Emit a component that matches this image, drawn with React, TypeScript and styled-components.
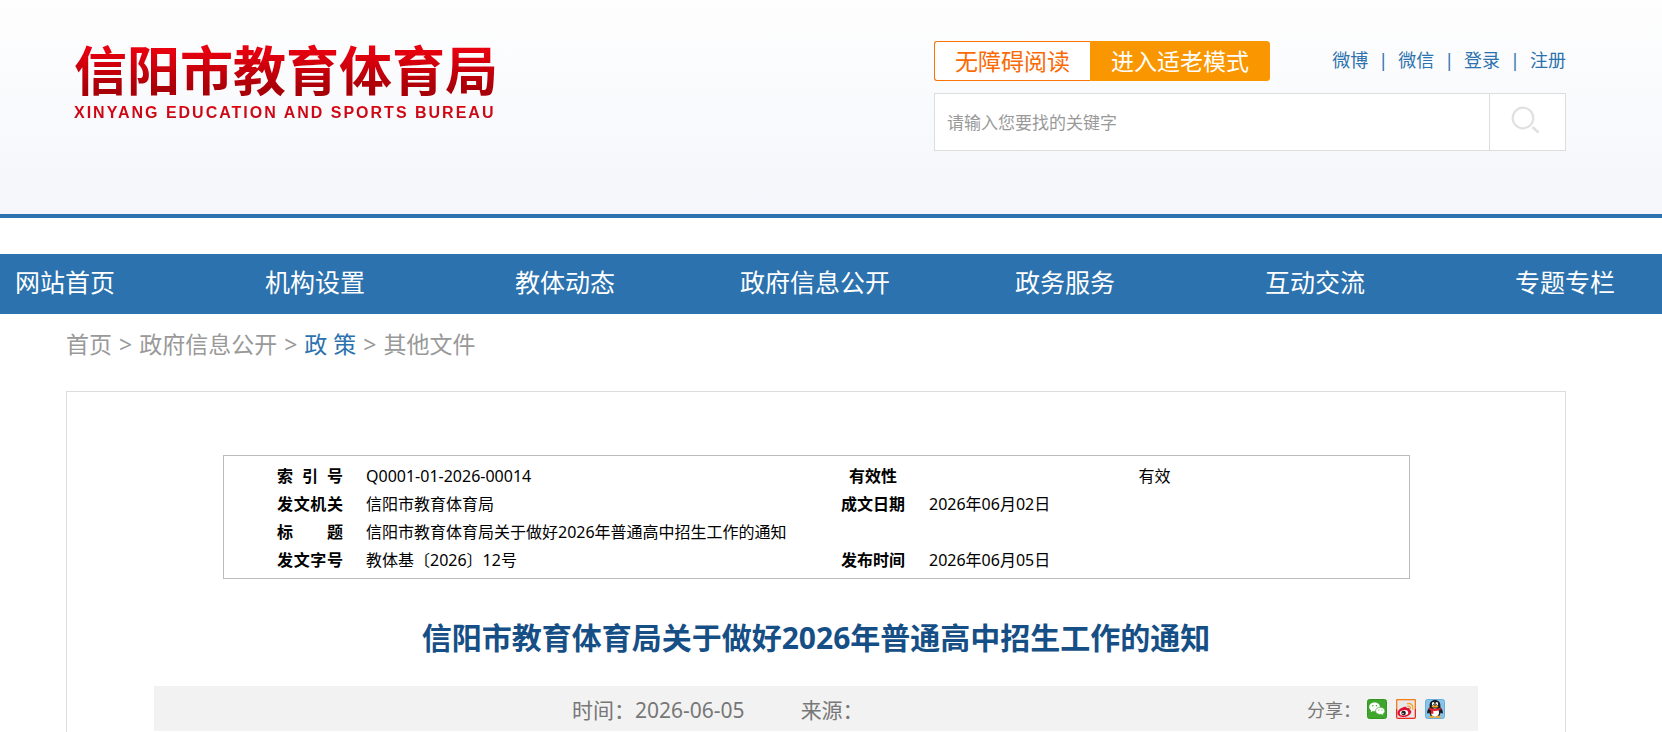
import React from "react";
import styled, { createGlobalStyle } from "styled-components";

const latinFirst = '"Noto Sans", "Noto Sans CJK SC", sans-serif';
const blue = "#2c72ae";

const GlobalStyle = createGlobalStyle`
  * { box-sizing: border-box; }
  body { margin: 0; background: #fff; font-family: ${latinFirst}; color: #000; overflow-x: hidden; }
  a { color: inherit; text-decoration: none; }
  h1, h2, p { margin: 0; padding: 0; }
  button, input { font-family: inherit; }
`;

const Header = styled.header`
  display: flex;
  justify-content: space-between;
  align-items: flex-start;
  height: 218px;
  padding: 38px 96px 0 66px;
  border-bottom: 4px solid ${blue};
  background: linear-gradient(#fefefe, #f4f6fb);
`;

const Brand = styled.a`
  display: flex;
  flex-direction: column;
  gap: 4px;
  padding-left: 8px;
`;

const BrandName = styled.h1`
  font: 700 53px/60px "Noto Sans CJK SC", sans-serif;
  color: transparent;
  background: linear-gradient(#e8000f 20%, #a80008 85%);
  background-clip: text;
  white-space: nowrap;
`;

const BrandLatin = styled.p`
  font: 700 16px/22px "Liberation Sans", sans-serif;
  letter-spacing: 2px;
  color: transparent;
  background: linear-gradient(#e8000f, #b0101a);
  background-clip: text;
  white-space: nowrap;
`;

const Tools = styled.div`
  width: 632px;
  padding-top: 3px;
`;

const ToolsTop = styled.div`
  display: flex;
  justify-content: space-between;
  height: 40px;
  margin-bottom: 12px;
`;

const ModeGroup = styled.div`
  display: flex;
`;

const ModeButton = styled.button<{ $filled?: boolean }>`
  height: 40px;
  padding: 0 20px;
  border: 1px solid ${(p) => (p.$filled ? "#fa9600" : "#fa7305")};
  border-right-width: ${(p) => (p.$filled ? "1px" : "0")};
  border-radius: ${(p) => (p.$filled ? "0 3px 3px 0" : "3px 0 0 3px")};
  background: ${(p) => (p.$filled ? "#fa9600" : "#fff")};
  color: ${(p) => (p.$filled ? "#fff" : "#fa6a05")};
  font-size: 23px;
  line-height: 38px;
  white-space: nowrap;
`;

const QuickLinks = styled.nav`
  display: flex;
  gap: 10px;
  font-size: 18px;
  line-height: 38px;
  color: ${blue};
`;

const SearchBox = styled.form`
  display: flex;
  height: 58px;
  border: 1px solid #ddd;
  background: #fff;
`;

const SearchInput = styled.input`
  flex: 1;
  min-width: 0;
  padding: 0 12px;
  border: 0;
  font-size: 17px;
  background: none;
  &::placeholder { color: #999; opacity: 1; }
`;

const SearchButton = styled.button`
  width: 76px;
  padding: 0 6px 0 0;
  border: 0;
  border-left: 1px solid #ddd;
  background: #fff;
`;

const MainNav = styled.nav`
  display: flex;
  justify-content: space-between;
  height: 60px;
  margin-top: 36px;
  padding: 0 47px 0 15px;
  background: ${blue};
`;

const NavLink = styled.a`
  display: flex;
  justify-content: center;
  width: 100px;
  color: #fff;
  font-size: 25px;
  line-height: 56px;
  white-space: nowrap;
`;

const Content = styled.main`
  padding: 0 96px 0 66px;
`;

const Breadcrumb = styled.nav`
  display: flex;
  gap: 7px;
  padding: 12px 0 29px;
  color: #999;
  font-size: 23px;
  line-height: 36px;
`;

const CurrentCrumb = styled.a`
  color: ${blue};
`;

const Article = styled.article`
  padding: 63px 87px 1px;
  border: 1px solid #ddd;
  border-bottom: 0;
`;

const MetaFrame = styled.div`
  margin: 0 68px 0 69px;
  padding: 6px 17px 4px 42px;
  border: 1px solid #bbb;
`;

const MetaTable = styled.table`
  width: 100%;
  table-layout: fixed;
  border-collapse: collapse;
  font-size: 16px;
  line-height: 28px;
  td, th { padding: 0; white-space: nowrap; }
  th { width: 88px; text-align: center; }
`;

const Spread = styled.span`
  display: block;
  width: 66px;
  margin: 0 auto;
  text-align-last: justify;
`;

const Value = styled.td`
  && { padding-left: 12px; }
`;

const CenterValue = styled.td`
  text-align: center;
`;

const Title = styled.h2`
  padding: 37px 0 26px;
  color: #164f86;
  font-size: 30px;
  line-height: 44px;
  text-align: center;
`;

const InfoBar = styled.div`
  display: flex;
  align-items: center;
  height: 45px;
  background: #f2f2f2;
  color: #777;
  font-size: 21px;
`;

const InfoMain = styled.div`
  display: flex;
  flex: 1;
  gap: 56px;
  padding-left: 418px;
`;

const Share = styled.div`
  display: flex;
  align-items: center;
  gap: 9px;
  padding-right: 33px;
  font-size: 18px;
`;

const ShareLabel = styled.span`
  margin-right: -3px;
`;

const ShareButton = styled.button`
  display: flex;
  padding: 0;
  border: 0;
  background: none;
`;

const navItems = ["网站首页", "机构设置", "教体动态", "政府信息公开", "政务服务", "互动交流", "专题专栏"];
const quickLinks = ["微博", "微信", "登录", "注册"];

const SearchIcon = () => (
  <svg width="30" height="30" viewBox="0 0 30 30" fill="none" stroke="#e0e0e0">
    <circle cx="13" cy="13" r="10.300" strokeWidth="2.200" />
    <path d="M22.500 22l6 5.500" strokeWidth="2.600" />
  </svg>
);

const WechatIcon = () => (
  <svg width="20" height="20" viewBox="0 0 20 20">
    <rect x=".5" y=".5" width="19" height="19" rx="2" fill="#3fa52c" stroke="#2f9a1e" />
    <path d="M7.600 3.500C4.500 3.500 2.200 5.400 2.200 7.900c0 1.400.7 2.500 1.900 3.300L3.700 13.300l2.200-1.200c3.700.8 7.100-1 7.100-4.200C13 5.400 10.700 3.500 7.600 3.500z" fill="#fff" />
    <path d="M13.300 8.200c-2.700 0-4.700 1.600-4.700 3.700s2 3.600 4.700 3.600l1.300-.1 1.900 1.100-.4-1.800c1.100-.6 1.800-1.700 1.800-2.800 0-2.100-2-3.700-4.600-3.700z" fill="#fff" stroke="#3fa52c" strokeWidth=".7" />
    <g fill="#3fa52c"><circle cx="5.800" cy="6.800" r=".8" /><circle cx="9.500" cy="6.800" r=".8" /><circle cx="11.800" cy="11" r=".6" /><circle cx="14.900" cy="11" r=".6" /></g>
  </svg>
);

const WeiboIcon = () => (
  <svg width="20" height="20" viewBox="0 0 20 20">
    <rect width="20" height="20" rx="2" fill="#e62b1e" />
    <path d="M0 10V2Q0 0 2 0h16Q20 0 20 2v8z" fill="#f57c16" />
    <rect x="1.300" y="1.300" width="17.400" height="17.400" fill="#e8e8e8" />
    <path d="M8 8c1.500-.6 2.800-.3 2.600 1.200 2-.7 3.600-.2 3.100 1.500 1.500.6 2 1.700 1.400 3-1 2.500-4 4.300-7.400 4.300-3.600 0-6.200-1.500-6.200-4C1.500 11.500 4.800 8.800 8 8z" fill="#dc1230" />
    <ellipse cx="8" cy="13.800" rx="4.300" ry="2.700" fill="#fff" transform="rotate(-8 8 13.800)" />
    <circle cx="7.600" cy="14" r="2.300" fill="#222" /><circle cx="7" cy="14.500" r=".7" fill="#fff" />
    <path d="M11.500 4.600c3.600-.8 6.200 1.800 5.200 5.400M11.800 7.200c1.800-.4 3 .8 2.500 2.400" fill="none" stroke="#f5a33a" strokeWidth="1.400" strokeLinecap="round" />
  </svg>
);

const QQIcon = () => (
  <svg width="20" height="20" viewBox="0 0 20 20">
    <rect x=".5" y=".5" width="19" height="19" rx="2" fill="#86c4ec" stroke="#68acdc" />
    <path d="M10 1C6.600 1 4.600 3.300 4.600 6.300v2C3 10 1.900 12 2.200 14.200c.3.900 1.300.2 2-.8L5.600 17h8.800l1.400-3.600c.7 1 1.700 1.700 2 .8.300-2.200-.8-4.200-2.400-5.900v-2C15.400 3.300 13.400 1 10 1z" fill="#1b1b22" />
    <ellipse cx="10" cy="13.600" rx="4" ry="4" fill="#fff" />
    <ellipse cx="8.200" cy="4.900" rx="1.300" ry="1.800" fill="#fff" /><ellipse cx="11.800" cy="4.900" rx="1.300" ry="1.800" fill="#fff" />
    <circle cx="8.600" cy="5.200" r=".5" /><circle cx="11.400" cy="5.200" r=".5" />
    <ellipse cx="10" cy="7.600" rx="3.300" ry="1" fill="#f9a51a" />
    <path d="M4.400 8.600c3.400 1.900 7.800 1.900 11.200 0l.4 2c-2.600 1.300-5.500 1.500-7.600 1.100v3H6v-3.400l-2-.8z" fill="#e3202b" />
    <ellipse cx="6.800" cy="17.900" rx="2.900" ry="1.200" fill="#e8a93a" /><ellipse cx="13.200" cy="17.900" rx="2.900" ry="1.200" fill="#e8a93a" />
  </svg>
);

export default function App() {
  return (
    <>
      <GlobalStyle />
      <Header>
        <Brand href="#">
          <BrandName>信阳市教育体育局</BrandName>
          <BrandLatin>XINYANG EDUCATION AND SPORTS BUREAU</BrandLatin>
        </Brand>
        <Tools>
          <ToolsTop>
            <ModeGroup>
              <ModeButton type="button">无障碍阅读</ModeButton>
              <ModeButton type="button" $filled>进入适老模式</ModeButton>
            </ModeGroup>
            <QuickLinks>
              {quickLinks.map((label, i) => (
                <React.Fragment key={label}>
                  {i > 0 && <span>|</span>}
                  <a href="#">{label}</a>
                </React.Fragment>
              ))}
            </QuickLinks>
          </ToolsTop>
          <SearchBox>
            <SearchInput type="text" aria-label="搜索" placeholder="请输入您要找的关键字" />
            <SearchButton type="button" aria-label="搜索"><SearchIcon /></SearchButton>
          </SearchBox>
        </Tools>
      </Header>
      <MainNav>
        {navItems.map((label) => <NavLink href="#" key={label}>{label}</NavLink>)}
      </MainNav>
      <Content>
        <Breadcrumb>
          <a href="#">首页</a><span>&gt;</span>
          <a href="#">政府信息公开</a><span>&gt;</span>
          <CurrentCrumb href="#">政 策</CurrentCrumb><span>&gt;</span>
          <a href="#">其他文件</a>
        </Breadcrumb>
        <Article>
          <MetaFrame>
            <MetaTable>
              <tbody>
                <tr>
                  <th scope="row"><Spread>索 引 号</Spread></th>
                  <Value>Q0001-01-2026-00014</Value>
                  <th scope="row">有效性</th>
                  <CenterValue>有效</CenterValue>
                </tr>
                <tr>
                  <th scope="row"><Spread>发文机关</Spread></th>
                  <Value>信阳市教育体育局</Value>
                  <th scope="row">成文日期</th>
                  <Value>2026年06月02日</Value>
                </tr>
                <tr>
                  <th scope="row"><Spread>标 题</Spread></th>
                  <Value colSpan={3}>信阳市教育体育局关于做好2026年普通高中招生工作的通知</Value>
                </tr>
                <tr>
                  <th scope="row"><Spread>发文字号</Spread></th>
                  <Value>教体基〔2026〕12号</Value>
                  <th scope="row">发布时间</th>
                  <Value>2026年06月05日</Value>
                </tr>
              </tbody>
            </MetaTable>
          </MetaFrame>
          <Title>信阳市教育体育局关于做好2026年普通高中招生工作的通知</Title>
          <InfoBar>
            <InfoMain>
              <span>时间：2026-06-05</span>
              <span>来源：</span>
            </InfoMain>
            <Share>
              <ShareLabel>分享：</ShareLabel>
              <ShareButton type="button" aria-label="微信"><WechatIcon /></ShareButton>
              <ShareButton type="button" aria-label="微博"><WeiboIcon /></ShareButton>
              <ShareButton type="button" aria-label="QQ"><QQIcon /></ShareButton>
            </Share>
          </InfoBar>
        </Article>
      </Content>
    </>
  );
}
